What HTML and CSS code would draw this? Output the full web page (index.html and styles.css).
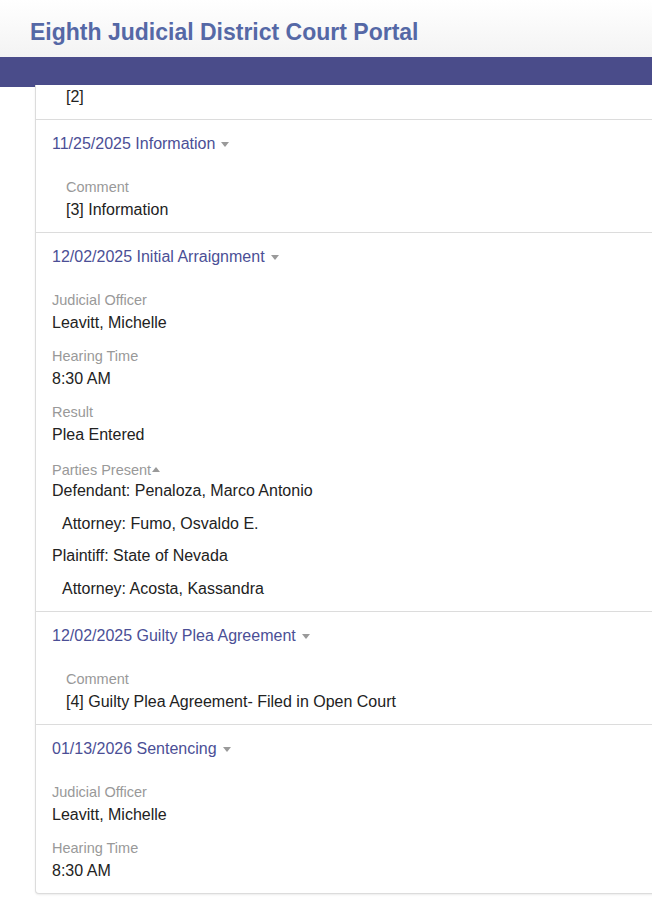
FILE: index.html
```html
<!DOCTYPE html>
<html lang="en">
<head>
<meta charset="utf-8">
<title>Eighth Judicial District Court Portal</title>
<link rel="stylesheet" href="styles.css">
</head>
<body>
<header class="site-header">
  <h1 class="site-title">Eighth Judicial District Court Portal</h1>
</header>
<div class="nav-bar"></div>
<main class="page">
  <section class="card">
    <div class="row row-partial">
      <div class="indent value first">[2]</div>
    </div>

    <div class="row">
      <div class="event-head">11/25/2025 Information <span class="caret down"></span></div>
      <div class="event-body indent">
        <div class="label">Comment</div>
        <div class="value">[3] Information</div>
      </div>
    </div>

    <div class="row">
      <div class="event-head">12/02/2025 Initial Arraignment <span class="caret down"></span></div>
      <div class="event-body">
        <div class="label">Judicial Officer</div>
        <div class="value">Leavitt, Michelle</div>
        <div class="label">Hearing Time</div>
        <div class="value">8:30 AM</div>
        <div class="label">Result</div>
        <div class="value">Plea Entered</div>
        <div class="label parties-label">Parties Present<span class="caret up"></span></div>
        <div class="party">Defendant: Penaloza, Marco Antonio</div>
        <div class="party sub">Attorney: Fumo, Osvaldo E.</div>
        <div class="party tight">Plaintiff: State of Nevada</div>
        <div class="party sub">Attorney: Acosta, Kassandra</div>
      </div>
    </div>

    <div class="row">
      <div class="event-head">12/02/2025 Guilty Plea Agreement <span class="caret down"></span></div>
      <div class="event-body indent">
        <div class="label">Comment</div>
        <div class="value">[4] Guilty Plea Agreement- Filed in Open Court</div>
      </div>
    </div>

    <div class="row">
      <div class="event-head">01/13/2026 Sentencing <span class="caret down"></span></div>
      <div class="event-body">
        <div class="label">Judicial Officer</div>
        <div class="value">Leavitt, Michelle</div>
        <div class="label">Hearing Time</div>
        <div class="value">8:30 AM</div>
      </div>
    </div>
  </section>
</main>
</body>
</html>
```

FILE: styles.css
```css
* { box-sizing: border-box; }

html, body {
  margin: 0;
  padding: 0;
  background: #fff;
  overflow-x: hidden;
}

body {
  font-family: "Liberation Sans", Arial, sans-serif;
  font-size: 16px;
  color: #222;
}

.site-header {
  height: 57px;
  background: linear-gradient(#ffffff, #f3f3f3);
  display: flex;
  align-items: center;
  padding-left: 30px;
}

.site-title {
  margin: 0;
  font-size: 23px;
  font-weight: bold;
  color: #5568a6;
  line-height: 1;
  padding-top: 8px;
}

.nav-bar {
  height: 30px;
  background: #4a4c8a;
}

.page {
  padding: 0 0 20px 35px;
}

.card {
  margin-right: -20px;
  border: 1px solid #dcdcdc;
  border-top: none;
  border-radius: 0 0 4px 4px;
  background: #fff;
  box-shadow: 0 1px 2px rgba(0, 0, 0, 0.08);
}

.row {
  padding: 13px 16px 11px;
  border-top: 1px solid #dcdcdc;
}

.row-partial {
  border-top: none;
  padding-top: 0;
  padding-bottom: 11px;
}

.value.first { margin-top: -2px; }

.indent { padding-left: 14px; }

.event-head {
  line-height: 22px;
  color: #4b4f96;
  display: flex;
  align-items: center;
}

.caret {
  display: inline-block;
  width: 0;
  height: 0;
  border-left: 4.5px solid transparent;
  border-right: 4.5px solid transparent;
}

.caret.down {
  border-top: 5px solid #9a9a9a;
  margin-left: 6px;
  margin-top: 1px;
}

.caret.up {
  border-bottom: 5px solid #9a9a9a;
  margin-left: 1px;
  margin-bottom: 2px;
}

.event-body { margin-top: 21px; }

.label {
  font-size: 14.5px;
  line-height: 22px;
  color: #999;
  margin-top: 11px;
}

.event-body .label:first-child { margin-top: 0; }

.parties-label {
  margin-top: 14px;
  line-height: 20px;
  display: flex;
  align-items: center;
}

.value {
  line-height: 22px;
  padding-top: 1px;
  color: #222;
}

.party {
  line-height: 22px;
  margin-top: 11px;
}

.party.tight { margin-top: 10px; }

.parties-label + .party { margin-top: 0; }

.party.sub { padding-left: 10px; }
```
